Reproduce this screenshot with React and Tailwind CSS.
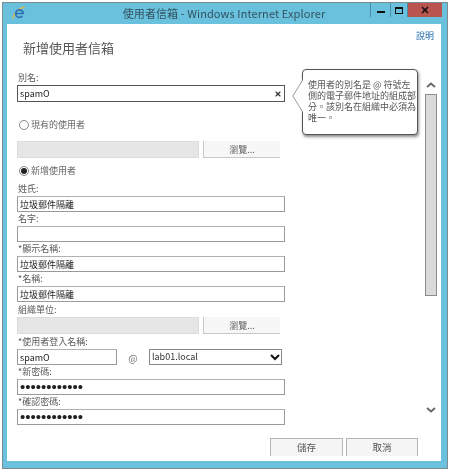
import { X } from "lucide-react";

const font = "font-['Noto_Sans_CJK_TC','Noto_Sans',sans-serif]";

function Label({ children }) {
  return <div className="h-[14px] pl-[1px] text-[9px] leading-[14px] text-[#5a5a5a]">{children}</div>;
}

function Field({ value, className = "w-[268px]" }) {
  return (
    <input
      readOnly
      value={value}
      className={`${className} block h-[16px] border border-[#9a9a9a] border-t-[#b0b0b0] bg-white px-[2px] text-[9px] text-[#222] outline-none ${font}`}
    />
  );
}

function PasswordField({ value }) {
  return (
    <input
      readOnly
      type="password"
      value={value}
      className="block h-[16px] w-[268px] border border-[#9a9a9a] border-t-[#b0b0b0] bg-white px-[2px] font-['Liberation_Sans',sans-serif] text-[15px] text-[#222] outline-none"
    />
  );
}

function Radio({ checked, label, className }) {
  return (
    <div className={`flex h-[14px] items-center gap-[2px] pl-[2px] ${className}`}>
      <span className="flex size-[10px] items-center justify-center rounded-full border border-[#8a8a8a] bg-white">
        {checked && <span className="size-[6px] rounded-full bg-[#222]" />}
      </span>
      <span className="text-[9px] text-[#666]">{label}</span>
    </div>
  );
}

function BrowseRow({ className }) {
  return (
    <div className={`flex gap-[4px] ${className}`}>
      <div className="h-[17px] w-[182px] border border-[#dcdcdc] bg-[#e6e6e6]" />
      <button className="h-[17px] w-[77px] border-b border-l border-[#c8c8c8] bg-[#f7f7f7] text-[9px] leading-[15px] text-[#666]">
        瀏覽...
      </button>
    </div>
  );
}

function Chevron({ up }) {
  return (
    <svg width="10" height="6" viewBox="0 0 10 6" className="mx-auto">
      <path d={up ? "M1 5 5 1.5 9 5" : "M1 1 5 4.5 9 1"} fill="none" stroke="#666" strokeWidth="1.8" />
    </svg>
  );
}

function IeLogo() {
  return (
    <svg width="14" height="14" viewBox="0 0 14 14">
      <path d="M1 12.5C1.5 8 6 2.5 12.5 1" fill="none" stroke="#e6b73a" strokeWidth="1.4" />
      <path d="M4 7.5h7.2A3.8 3.8 0 1 0 10.4 10" fill="none" stroke="#2f6fb5" strokeWidth="1.7" />
    </svg>
  );
}

export default function App() {
  return (
    <div className={`h-[472px] w-[450px] bg-white p-[2px] blur-[0.3px] ${font}`}>
      <div className="flex h-[467px] w-[446px] flex-col border border-[#7d8a90] bg-[#69c1de] pb-[7px] pl-[4px] pr-[6px]">
        {/* title bar */}
        <header className="relative flex h-[21px] shrink-0 items-center justify-center">
          <span className="absolute left-[5px] top-[3px]">
            <IeLogo />
          </span>
          <span className="text-[11px] tracking-[0.1px] text-[#33525e]">使用者信箱 - Windows Internet Explorer</span>
          <div className="absolute right-[-1px] top-0 flex h-[14px]">
            <div className="flex w-[20px] items-end justify-center border-l border-[#4d8ea5] pb-[4px]">
              <span className="h-[2px] w-[8px] bg-[#111]" />
            </div>
            <div className="flex w-[18px] items-center justify-center border-x border-[#4d8ea5]">
              <span className="h-[7px] w-[8px] border border-t-2 border-[#111]" />
            </div>
            <div className="flex w-[34px] items-center justify-center bg-[#b9544e]">
              <X size={10} strokeWidth={4} className="text-[#111]" />
            </div>
          </div>
        </header>

        {/* content */}
        <main className="relative flex min-h-0 flex-1 flex-col bg-white">
          <div className="flex h-[47px] shrink-0 justify-between pl-[16px] pr-[7px]">
            <h1 className="pt-[14px] text-[13px] font-normal leading-[20px] text-[#555]">新增使用者信箱</h1>
            <a className="pt-[6px] text-[9px] leading-[12px] text-[#2a72b5]">說明</a>
          </div>

          <div className="flex justify-between pl-[10px] pr-[4px]">
            <form className="w-[268px]">
              <Label>別名:</Label>
              <div className="relative">
                <input
                  readOnly
                  value="spamO"
                  className={`block h-[17px] w-[268px] border border-[#555] bg-white px-[2px] text-[9px] text-[#222] outline-none ${font}`}
                />
                <X size={8} strokeWidth={3.5} className="absolute right-[3px] top-[5px] text-[#333]" />
              </div>
              <Radio label="現有的使用者" className="mt-[16px]" />
              <BrowseRow className="mt-[9px]" />
              <Radio checked label="新增使用者" className="mt-[6px]" />
              <div className="mt-[4px]" />
              <Label>姓氏:</Label>
              <Field value="垃圾郵件隔離" />
              <Label>名字:</Label>
              <Field value="" />
              <Label>*顯示名稱:</Label>
              <Field value="垃圾郵件隔離" />
              <Label>*名稱:</Label>
              <Field value="垃圾郵件隔離" />
              <div className="mt-[1px]" />
              <Label>組織單位:</Label>
              <BrowseRow />
              <div className="mt-[1px]" />
              <Label>*使用者登入名稱:</Label>
              <div className="flex items-center">
                <Field value="spamO" className="w-[100px]" />
                <span className="w-[32px] text-center text-[10px] text-[#777]">@</span>
                <div className="relative">
                  <select className={`block h-[16px] w-[133px] appearance-none border border-[#888] bg-white px-[2px] text-[9px] text-[#333] outline-none ${font}`}>
                    <option>lab01.local</option>
                  </select>
                  <svg width="10" height="7" viewBox="0 0 10 7" className="absolute right-[2px] top-[5px]">
                    <path d="M1 1 5 5 9 1" fill="none" stroke="#111" strokeWidth="2" />
                  </svg>
                </div>
              </div>
              <Label>*新密碼:</Label>
              <PasswordField value="abcdefghijkl" />
              <Label>*確認密碼:</Label>
              <PasswordField value="abcdefghijkl" />
            </form>

            {/* scrollbar */}
            <div className="flex w-[12px] flex-col pt-[11px]">
              <Chevron up />
              <div className="mt-[6px] h-[202px] w-[12px] border border-[#8c8c8c] bg-[#dadada]" />
              <div className="mt-[111px]">
                <Chevron />
              </div>
            </div>
          </div>

          <footer className="mt-[13px] flex justify-end gap-[3px] pr-[23px]">
            <button className="h-[18px] w-[73px] border border-b-0 border-[#b5b5b5] bg-[#f5f5f5] text-[9.5px] leading-[15px] text-[#555]">儲存</button>
            <button className="h-[18px] w-[72px] border border-b-0 border-[#b5b5b5] bg-[#f5f5f5] text-[9.5px] leading-[15px] text-[#555]">取消</button>
          </footer>

          {/* help callout */}
          <div className="absolute left-[295px] top-[45px] h-[66px] w-[116px] rounded-[4px] border border-[#555] bg-white py-[9px] pl-[5px] text-[9px] leading-[11px] text-[#555] shadow-[1px_2px_3px_rgba(0,0,0,0.45)]">
            使用者的別名是 @ 符號左側的電子郵件地址的組成部分。該別名在組織中必須為唯一。
            <svg width="11" height="34" viewBox="0 0 11 34" className="absolute left-[-11px] top-[9px]">
              <path d="M11 0.5 0.8 17 11 33.5" fill="#fff" stroke="#999" />
            </svg>
          </div>
        </main>
      </div>
    </div>
  );
}
